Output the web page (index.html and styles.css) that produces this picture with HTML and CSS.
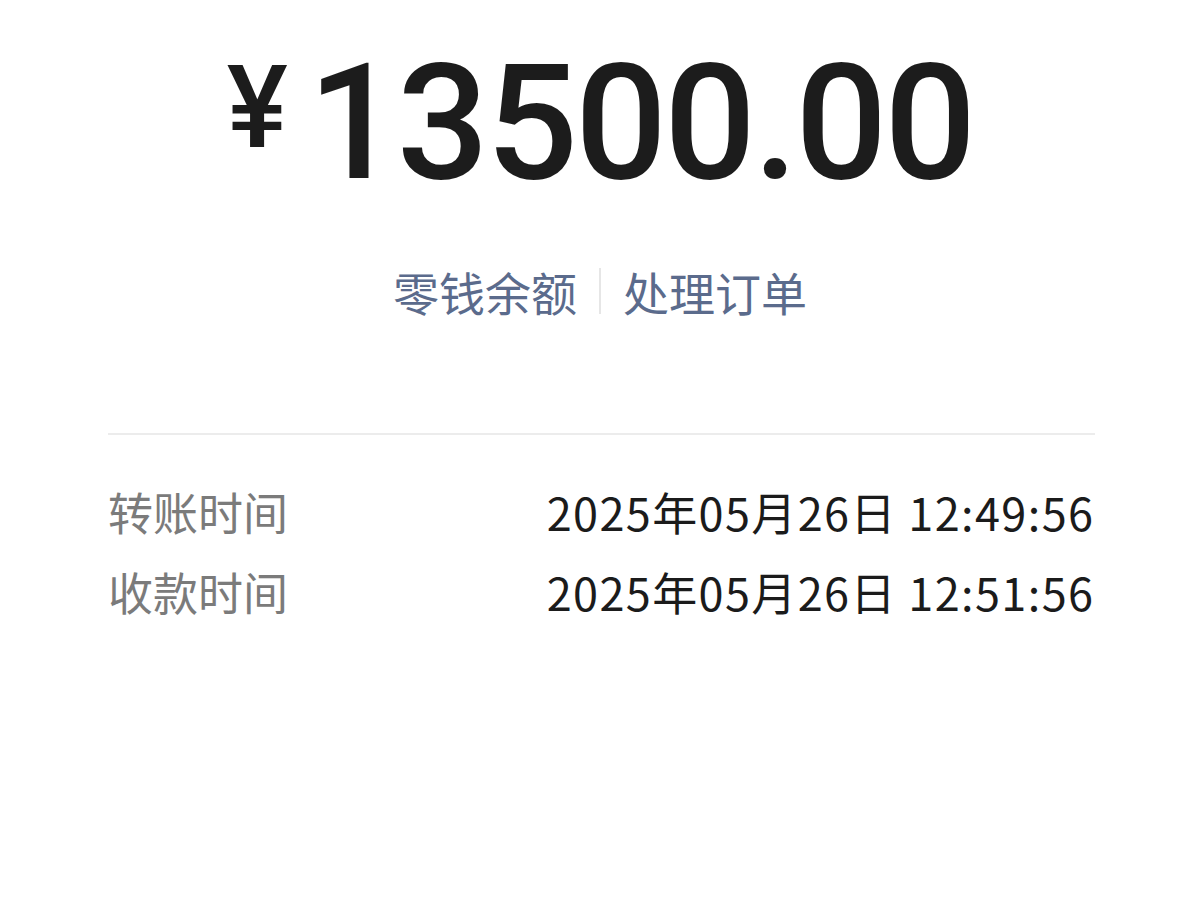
FILE: index.html
```html
<!DOCTYPE html>
<html lang="zh-CN">
<head>
<meta charset="utf-8">
<title>转账详情</title>
<link rel="stylesheet" href="styles.css">
</head>
<body>
<main class="page">
  <section class="amount">
    <span class="currency">¥</span>
    <span class="value">13500.00</span>
  </section>
  <nav class="links">
    <span class="link">零钱余额</span>
    <span class="sep"></span>
    <span class="link">处理订单</span>
  </nav>
  <div class="rule"></div>
  <section class="details">
    <div class="row">
      <span class="label">转账时间</span>
      <span class="time">2025年05月26日 12:49:56</span>
    </div>
    <div class="row">
      <span class="label">收款时间</span>
      <span class="time">2025年05月26日 12:51:56</span>
    </div>
  </section>
</main>
</body>
</html>
```
FILE: styles.css
```css
html, body {
  margin: 0;
  padding: 0;
  background: #ffffff;
}
body {
  width: 1200px;
  height: 900px;
  overflow: hidden;
  font-family: "Noto Sans CJK SC", "Noto Sans", sans-serif;
}
.page {
  display: flex;
  flex-direction: column;
}
.amount {
  display: flex;
  justify-content: center;
  align-items: flex-start;
  padding-top: 42px;
  color: #1c1c1c;
  font-family: Roboto, "Liberation Sans", sans-serif;
  font-weight: 500;
}
.currency {
  font-size: 115px;
  line-height: 1;
  margin-top: 8px;
  margin-right: 20px;
}
.value {
  font-size: 162px;
  line-height: 1;
  letter-spacing: -3px;
}
.links {
  display: flex;
  justify-content: center;
  align-items: center;
  gap: 22px;
  margin-top: 64px;
  color: #5b6b8c;
  font-size: 46px;
  line-height: 46px;
}
.sep {
  width: 2px;
  height: 46px;
  background: #e6e6e6;
}
.rule {
  height: 2px;
  background: #ececec;
  margin: 119px 105px 0 108px;
}
.details {
  display: flex;
  flex-direction: column;
  gap: 34px;
  padding: 54px 107px 0 108px;
}
.row {
  display: flex;
  justify-content: space-between;
  align-items: center;
  height: 46px;
}
.label {
  color: #7b7b7b;
  font-size: 45px;
  line-height: 46px;
}
.time {
  color: #1b1b1b;
  font-size: 45px;
  line-height: 46px;
  letter-spacing: 1.4px;
  margin-right: -1.4px;
}
```
